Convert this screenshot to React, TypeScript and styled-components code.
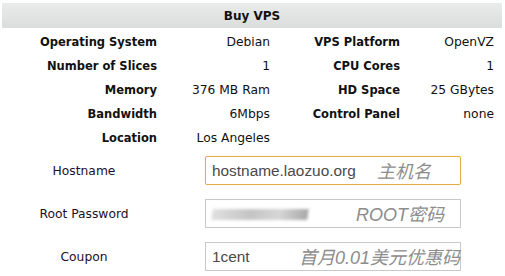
import styled, { createGlobalStyle } from 'styled-components';

const Global = createGlobalStyle`
  body {
    margin: 0;
    background: #fff;
    font-family: "DejaVu Sans", Verdana, sans-serif;
  }
`;

type Spec = [string, string, string?, string?];

const specs: Spec[] = [
  ['Operating System', 'Debian', 'VPS Platform', 'OpenVZ'],
  ['Number of Slices', '1', 'CPU Cores', '1'],
  ['Memory', '376 MB Ram', 'HD Space', '25 GBytes'],
  ['Bandwidth', '6Mbps', 'Control Panel', 'none'],
  ['Location', 'Los Angeles'],
];

const App = () => {
  return (
    <Page>
      <Global />
      <Header>Buy VPS</Header>
      <Specs>
        {specs.map((row) => (
          <SpecRow key={row[0]}>
            <Label>{row[0]}</Label>
            <Value>{row[1]}</Value>
            <Label>{row[2]}</Label>
            <Value>{row[3]}</Value>
          </SpecRow>
        ))}
      </Specs>
      <Form>
        <FieldRow>
          <FieldLabel>Hostname</FieldLabel>
          <Field $focused>
            <FieldText>hostname.laozuo.org</FieldText>
            <Hint $right={29}>主机名</Hint>
          </Field>
        </FieldRow>
        <FieldRow>
          <FieldLabel>Root Password</FieldLabel>
          <Field>
            <Smudge />
            <Hint $right={16}>ROOT密码</Hint>
          </Field>
        </FieldRow>
        <FieldRow>
          <FieldLabel>Coupon</FieldLabel>
          <Field>
            <FieldText>1cent</FieldText>
            <Hint $right={0}>首月0.01美元优惠码</Hint>
          </Field>
        </FieldRow>
      </Form>
    </Page>
  );
};

export default App;

const Page = styled.div`
  width: 500px;
  padding: 3px 3px 0 2px;
`;

const Header = styled.div`
  height: 25px;
  line-height: 26px;
  text-align: center;
  font-size: 12px;
  font-weight: bold;
  color: #111;
  background: linear-gradient(#e9eaea, #dcdddd);
`;

const Specs = styled.div`
  display: flex;
  flex-direction: column;
  padding-top: 2px;
`;

const SpecRow = styled.div`
  display: grid;
  grid-template-columns: 155px 113px 130px 94px;
  height: 24px;
  align-items: center;
  font-size: 12px;
  color: #111;
`;

const Label = styled.div`
  text-align: right;
  font-weight: bold;
  font-size: 11.5px;
`;

const Value = styled.div`
  text-align: right;
  font-size: 12.3px;
`;

const Form = styled.div`
  display: flex;
  flex-direction: column;
  gap: 14px;
  padding-top: 6px;
`;

const FieldRow = styled.div`
  display: flex;
  align-items: center;
`;

const FieldLabel = styled.div`
  width: 164px;
  text-align: center;
  font-size: 12.3px;
  color: #220f2a;
`;

const Field = styled.div<{ $focused?: boolean }>`
  position: relative;
  margin-left: 39px;
  width: 256px;
  height: 29px;
  display: flex;
  align-items: center;
  padding-left: 6px;
  box-sizing: border-box;
  border: 1px solid ${(p) => (p.$focused ? '#e5ac4c' : '#c9c9c9')};
  border-radius: ${(p) => (p.$focused ? '2px' : '0')};
  box-shadow: ${(p) => (p.$focused ? '0 0 1px #f0c47a' : 'none')};
`;

const FieldText = styled.span`
  font-family: "Liberation Sans", Arial, sans-serif;
  font-size: 15.4px;
  color: #4a4a4a;
`;

const Hint = styled.span<{ $right: number }>`
  position: absolute;
  right: ${(p) => p.$right}px;
  top: 50%;
  transform: translateY(-52%);
  font-family: "Liberation Sans", "Noto Sans CJK SC", sans-serif;
  font-style: italic;
  font-size: 18px;
  color: #8d8d8d;
`;

const Smudge = styled.span`
  display: block;
  width: 96px;
  height: 11px;
  margin-top: 1px;
  background: linear-gradient(90deg, #e0e0e0, #c4c4c4 40%, #d6d6d6 70%, #a8a8a8);
  filter: blur(1.5px);
  transform: skewX(-8deg);
`;
